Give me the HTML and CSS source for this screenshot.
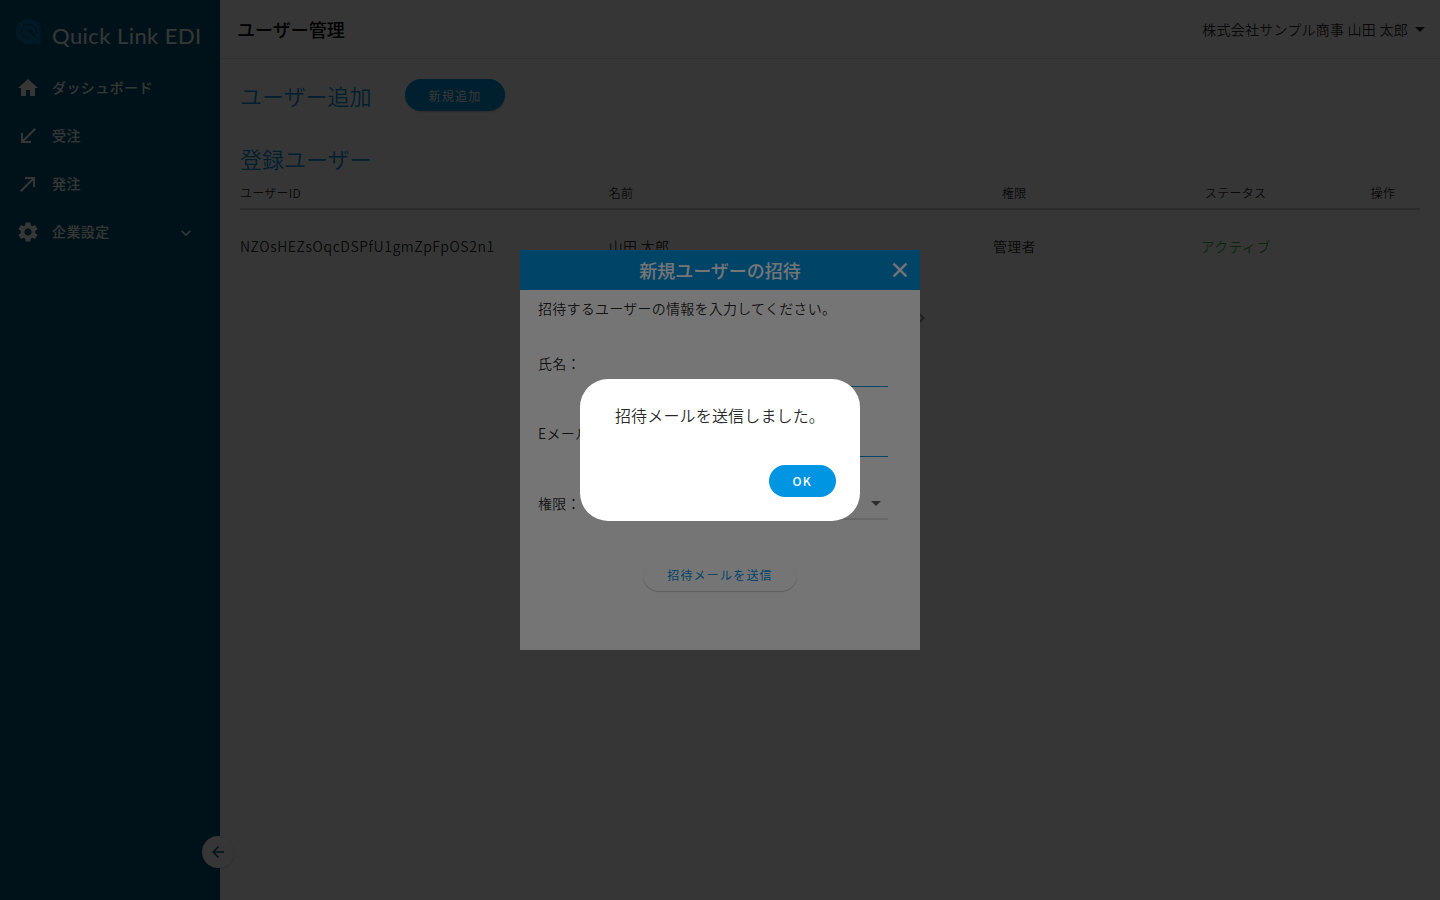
FILE: index.html
```html
<!DOCTYPE html>
<html lang="ja">
<head>
<meta charset="utf-8">
<title>ユーザー管理 - Quick Link EDI</title>
<link rel="stylesheet" href="styles.css">
</head>
<body>
<div class="app">
  <aside class="sidebar">
    <div class="brand">
      <svg class="brand-mark" viewBox="0 0 26 26" aria-hidden="true">
        <path d="M12.500 0C19.500 0 25 5.500 25 12c0 2-.5 3.500-1.500 5l1 1c1.500 1.500.5 3.500-1 4 2 1 2 3 .5 3.500h-4c-1.500 0-2-1.500-2.500-2.500-.5 1.500-1.500 2.500-3 2.500h-2C5.500 25.500 0 20 0 12.500S5.500 0 12.500 0z" fill="#0078b0"/>
        <path d="M11 18.500C7.500 18 5.500 15.500 5.500 12.500c0-4 3-7.500 7-7.500s8 3 8 7c0 1-.5 2-1.500 2.500" fill="none" stroke="#005677" stroke-width="1.500" stroke-linecap="round"/>
        <path d="M15 13c0 3.500 4 2 4.500 5.500" fill="none" stroke="#005677" stroke-width="1.500" stroke-linecap="round"/>
        <circle cx="14.500" cy="12" r="2.200" fill="#005677"/>
      </svg>
      <span class="brand-name">Quick Link EDI</span>
    </div>
    <nav class="nav">
      <a class="nav-item" href="#"><svg viewBox="0 0 24 24"><path d="M10 20v-6h4v6h5v-8h3L12 3 2 12h3v8z"/></svg><span>ダッシュボード</span></a>
      <a class="nav-item" href="#"><svg viewBox="0 0 24 24"><path d="M20 5.410L18.590 4 7 15.590V9H5v10h10v-2H8.410z"/></svg><span>受注</span></a>
      <a class="nav-item" href="#"><svg viewBox="0 0 24 24"><path d="M9 5v2h6.590L4 18.590 5.410 20 17 8.410V15h2V5z"/></svg><span>発注</span></a>
      <a class="nav-item" href="#"><svg viewBox="0 0 24 24"><path d="M19.140 12.940c.04-.3.06-.61.06-.94 0-.32-.02-.64-.07-.94l2.030-1.580c.18-.14.23-.41.12-.61l-1.920-3.320c-.12-.22-.37-.29-.59-.22l-2.390.96c-.5-.38-1.030-.7-1.620-.94l-.36-2.540c-.04-.24-.24-.41-.48-.41h-3.840c-.24 0-.43.17-.47.41l-.36 2.540c-.59.24-1.130.57-1.620.94l-2.390-.96c-.22-.08-.47 0-.59.22L2.740 8.870c-.12.21-.08.47.12.61l2.030 1.580c-.05.3-.09.63-.09.94s.02.64.07.94l-2.030 1.580c-.18.14-.23.41-.12.61l1.920 3.320c.12.22.37.29.59.22l2.390-.96c.5.38 1.030.7 1.620.94l.36 2.540c.05.24.24.41.48.41h3.840c.24 0 .44-.17.47-.41l.36-2.540c.59-.24 1.130-.56 1.620-.94l2.390.96c.22.08.47 0 .59-.22l1.920-3.320c.12-.22.07-.47-.12-.61l-2.010-1.580zM12 15.600c-1.980 0-3.600-1.620-3.600-3.600s1.620-3.600 3.600-3.600 3.600 1.620 3.600 3.600-1.620 3.600-3.600 3.600z"/></svg><span>企業設定</span><svg class="nav-caret" viewBox="0 0 24 24"><path d="M7.410 8.590L12 13.170l4.590-4.580L18 10l-6 6-6-6z"/></svg></a>
    </nav>
    <button class="collapse" aria-label="メニューを閉じる"><svg viewBox="0 0 24 24"><path d="M20 11H7.830l5.590-5.590L12 4l-8 8 8 8 1.410-1.410L7.830 13H20z"/></svg></button>
  </aside>
  <div class="main">
    <header class="topbar">
      <h1 class="page-title">ユーザー管理</h1>
      <button class="account"><span>株式会社サンプル商事 山田 太郎</span><svg viewBox="0 0 10 5"><path d="M0 0h10L5 5z"/></svg></button>
    </header>
    <main class="content">
      <section class="add-row">
        <h2 class="section-title">ユーザー追加</h2>
        <button class="btn btn-primary btn-add">新規追加</button>
      </section>
      <section class="users">
        <h2 class="section-title">登録ユーザー</h2>
        <table class="user-table">
          <colgroup><col class="col-id"><col class="col-name"><col class="col-role"><col class="col-status"><col class="col-action"></colgroup>
          <thead><tr><th>ユーザーID</th><th>名前</th><th class="center">権限</th><th class="center">ステータス</th><th class="center">操作</th></tr></thead>
          <tbody><tr><td class="user-id">NZOsHEZsOqcDSPfU1gmZpFpOS2n1</td><td>山田 太郎</td><td class="center">管理者</td><td class="center active">アクティブ</td><td></td></tr></tbody>
        </table>
        <div class="pager">
          <button aria-label="前のページ"><svg viewBox="0 0 24 24"><path d="M15.410 7.410L14 6l-6 6 6 6 1.410-1.410L10.830 12z"/></svg></button>
          <button aria-label="次のページ"><svg viewBox="0 0 24 24"><path d="M10 6L8.590 7.410 13.170 12l-4.580 4.590L10 18l6-6z"/></svg></button>
        </div>
      </section>
    </main>
  </div>
</div>

<div class="overlay">
  <form class="modal" role="dialog" aria-labelledby="modal-title">
    <div class="modal-head">
      <h2 class="modal-title" id="modal-title">新規ユーザーの招待</h2>
      <button type="button" class="close" aria-label="閉じる"><svg viewBox="0 0 24 24"><path d="M19 6.410L17.590 5 12 10.590 6.410 5 5 6.410 10.590 12 5 17.590 6.410 19 12 13.410 17.590 19 19 17.590 13.410 12z"/></svg></button>
    </div>
    <div class="modal-body">
      <p class="lead">招待するユーザーの情報を入力してください。</p>
      <div class="field"><label for="name">氏名：</label><input id="name" type="text"></div>
      <div class="field"><label for="email">Eメール：</label><input id="email" type="email"></div>
      <div class="field"><label for="role">権限：</label><div class="select"><select id="role"><option></option></select><svg viewBox="0 0 10 5"><path d="M0 0h10L5 5z"/></svg></div></div>
      <button type="button" class="btn btn-light">招待メールを送信</button>
    </div>
  </form>
</div>

<div class="overlay">
  <div class="alert" role="alertdialog" aria-labelledby="alert-text">
    <p class="alert-text" id="alert-text">招待メールを送信しました。</p>
    <button class="btn btn-primary btn-ok">OK</button>
  </div>
</div>
</body>
</html>
```
FILE: styles.css
```css
* { box-sizing: border-box; }
body {
  margin: 0;
  font-family: "Noto Sans CJK JP", sans-serif;
  font-size: 14px;
  font-weight: 350;
  line-height: 20px;
  letter-spacing: 0.018em;
  color: rgba(0, 0, 0, .87);
}
h1, h2, p { margin: 0; font-weight: 350; letter-spacing: 0; }
button, input, select { font: inherit; letter-spacing: inherit; color: inherit; border: 0; padding: 0; background: none; }
svg { fill: currentColor; display: block; flex: none; }

.app { display: flex; min-height: 100vh; background: #fff; }
.sidebar { position: relative; flex: 0 0 220px; background: #005677; color: #fff; }
.brand { display: flex; align-items: center; gap: 10px; height: 64px; padding: 0 16px; }
.brand-mark { width: 26px; height: 26px; }
.brand-name { font: 22px/28px Lato, sans-serif; letter-spacing: 0.02em; white-space: nowrap; padding-top: 8px; }
.nav { display: flex; flex-direction: column; }
.nav-item { display: flex; align-items: center; gap: 12px; height: 48px; padding: 0 16px; color: inherit; text-decoration: none; font-weight: 500; letter-spacing: 0.03em; }
.nav-item svg { width: 24px; height: 24px; }
.nav-item span { padding-bottom: 2px; }
.nav-item .nav-caret { width: 20px; height: 20px; margin: 2px 8px 0 auto; }
.collapse { position: absolute; right: -14px; bottom: 32px; width: 32px; height: 32px; border-radius: 50%; background: #fff; color: #005677; display: grid; place-items: center; box-shadow: 0 1px 3px rgba(0, 0, 0, .2); }
.collapse svg { width: 18px; height: 18px; }

.main { flex: 1; min-width: 0; }
.topbar { display: flex; align-items: center; justify-content: space-between; height: 59px; padding: 0 15px 0 17px; border-bottom: 1px solid #e0e0e0; }
.page-title { font-size: 18px; line-height: 28px; font-weight: 500; color: #000; }
.account { display: flex; align-items: center; gap: 7px; }
.account svg { width: 10px; height: 5px; }
.content { padding: 20px; }
.add-row { display: flex; align-items: center; gap: 33px; }
.section-title { font-size: 22px; line-height: 32px; color: #0095e3; }
.btn { height: 32px; border-radius: 16px; padding: 0 24px; font-size: 12px; letter-spacing: 0.1em; font-weight: 400; }
.btn-primary { background: #0095e3; color: #fff; }
.btn-add { padding-top: 2px; box-shadow: 0 1px 2px rgba(0, 0, 0, .2); }
.btn-light { background: #fff; color: #0095e3; box-shadow: 0 1px 1px rgba(0, 0, 0, .2); }
.users { padding-top: 31px; }
.user-table { width: 100%; table-layout: fixed; border-collapse: collapse; text-align: left; }
.col-id { width: 31.25%; }
.col-name { width: 25%; }
.col-role, .col-status { width: 18.75%; }
.col-action { width: 6.25%; }
th { height: 35px; padding: 3px 0 0; font-size: 12px; font-weight: inherit; border-bottom: 2px solid #d0d0d0; }
td { height: 74px; padding: 0 0 2px; }
.center { text-align: center; }
.user-id { letter-spacing: 0.04em; }
.active { color: #4caf50; }
.pager { display: flex; justify-content: center; gap: 158px; padding-top: 23px; }
.pager svg { width: 24px; height: 24px; fill: #9e9e9e; }

.overlay { position: fixed; inset: 0; display: grid; place-items: center; background: rgba(0, 0, 0, .54); }
.modal { width: 400px; min-height: 400px; background: #fff; }
.modal-head { display: grid; grid-template-columns: 40px 1fr 40px; align-items: center; height: 40px; background: #0095e3; color: #fff; }
.modal-title { grid-column: 2; font-size: 18px; line-height: 28px; font-weight: 500; text-align: center; }
.close { display: grid; place-items: center; height: 40px; }
.close svg { width: 24px; height: 24px; stroke: currentColor; stroke-width: 0.5; }
.modal-body { display: flex; flex-direction: column; padding: 8px 32px 0 18px; }
.lead { letter-spacing: 0.018em; padding-bottom: 10px; }
.field { display: flex; align-items: center; height: 70px; }
.field label { flex: 0 0 100px; white-space: nowrap; }
.field input { flex: 1; min-width: 0; height: 47px; border-bottom: 1px solid #0095e3; border-radius: 0; }
.select { position: relative; flex: 1; }
.select select { width: 100%; height: 34px; appearance: none; border-bottom: 2px solid #e0e0e0; border-radius: 0; }
.select svg { position: absolute; right: 7px; top: 15px; width: 10px; height: 5px; fill: #616161; }
.btn-light { align-self: center; margin: 21px -14px 0 0; }

.alert { display: flex; flex-direction: column; gap: 38px; width: 280px; padding: 24px; border-radius: 28px; background: #fff; }
.alert-text { font-size: 16px; line-height: 24px; letter-spacing: 0.01em; text-align: center; }
.btn-ok { align-self: flex-end; font-weight: 500; }
```
